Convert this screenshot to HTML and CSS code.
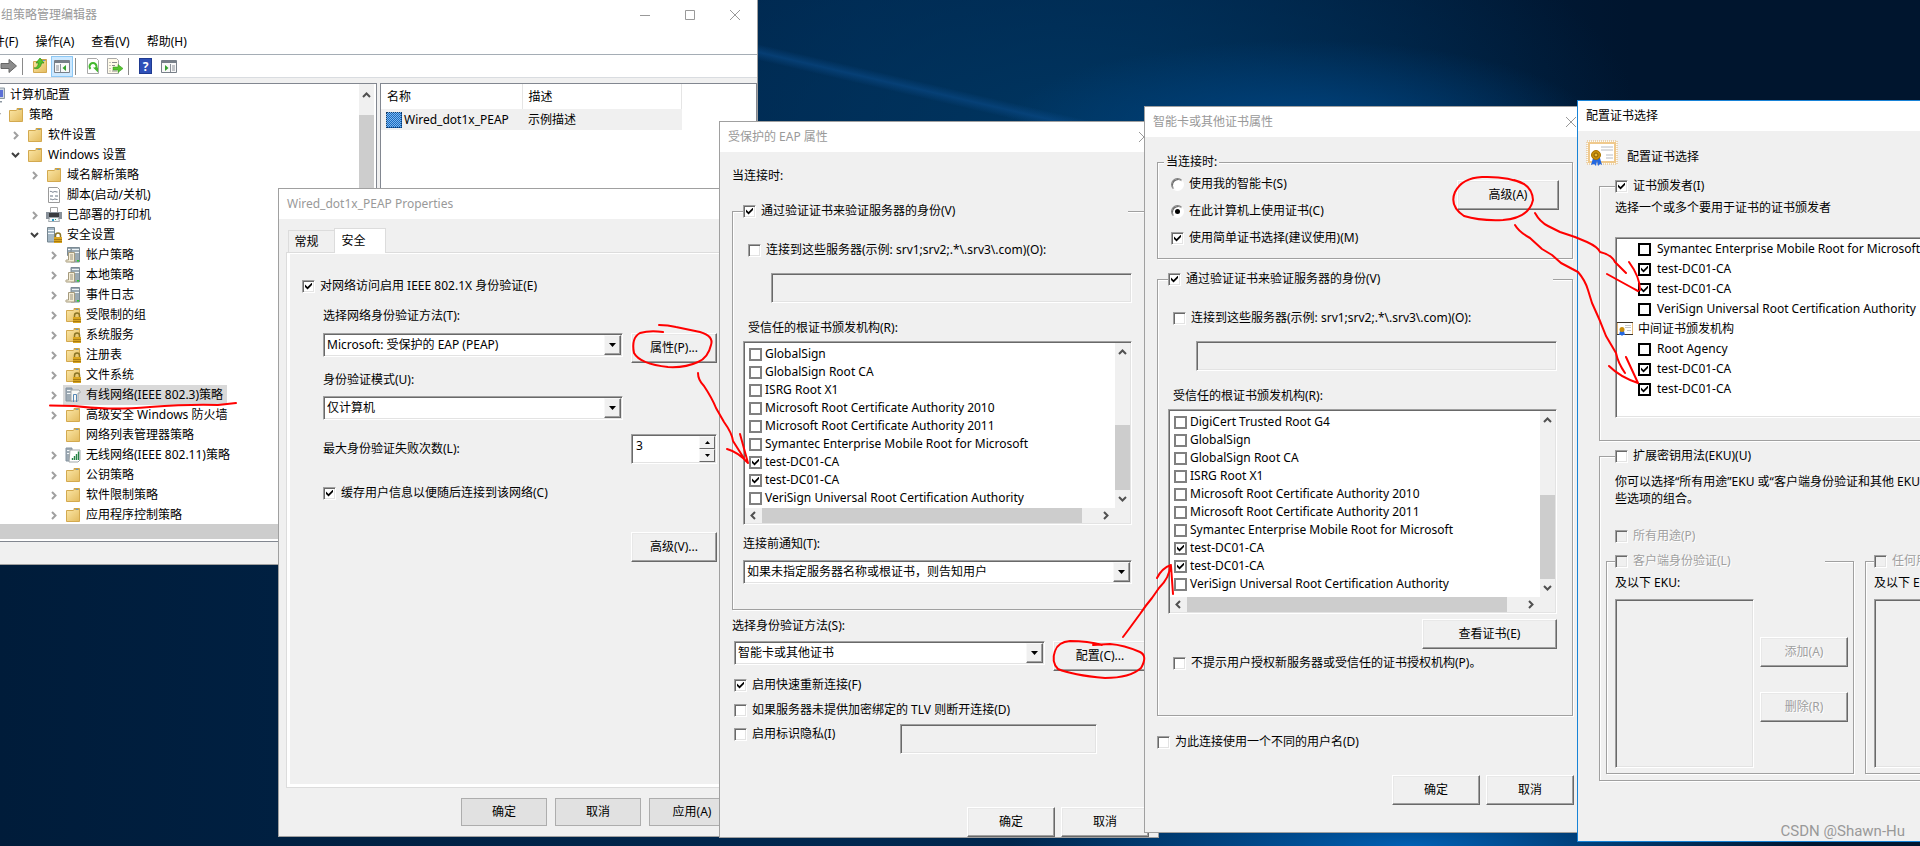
FILE: index.html
```html
<!DOCTYPE html>
<html lang="zh-CN">
<head>
<meta charset="utf-8">
<title>组策略管理编辑器</title>
<link rel="stylesheet" href="styles.css">
</head>
<body>
<svg class="sprite" aria-hidden="true">
  <defs>
    <linearGradient id="paper" x1="0" y1="0" x2="1" y2="1"><stop offset="0" stop-color="#fbe6a6"/><stop offset="1" stop-color="#e3bb5e"/></linearGradient>
  </defs>
  <symbol id="folder" viewBox="0 0 16 16">
    <path d="M9 2.500V1.500h5.500V14" fill="#f3d58a" stroke="#c9a14a"/>
    <path d="M1.500 3.500H8l1.500-1H14.500V14.500H1.500z" fill="url(#paper)" stroke="#d3a94f"/>
    <path d="M11 2.500h2" stroke="#5b9bd5"/>
  </symbol>
  <symbol id="lock" viewBox="0 0 16 16">
    <path d="M9.500 11V8.500a2.500 2.500 0 0 1 5 0V11" fill="none" stroke="#8a7425" stroke-width="1.500"/>
    <path d="M8 10h8v6H8z" fill="#d9a520"/><path d="M8 12.500h8M8 14.500h8" stroke="#a87a10"/>
  </symbol>
  <symbol id="folder-lock" viewBox="0 0 16 16"><use href="#folder"/><use href="#lock"/></symbol>
  <symbol id="tower" viewBox="0 0 16 16">
    <path d="M6 .5h8.500v14.500H6z" fill="#9aa9b3" stroke="#7b8a94"/>
    <path d="M7 2.500h7M7 5.500h7" stroke="#edf3f6"/><path d="M12 13h2v1.500h-2z" fill="#29d12c"/>
  </symbol>
  <symbol id="server-lock" viewBox="0 0 16 16">
    <path d="M1.500.5h7v14.500h-7z" fill="#a4b7c4" stroke="#75858f"/><path d="M2 3.500h6M2 6.500h6" stroke="#f2f7fa"/><use href="#lock"/>
  </symbol>
  <symbol id="policy" viewBox="0 0 16 16">
    <use href="#tower"/><path d="M3.500 5.500h6V15H1.500c-1 0-1-2 0-2h2z" fill="#f3ecd6" stroke="#a59a7d"/><path d="M5 8h3M5 10h3M5 12h3" stroke="#9b947e"/>
  </symbol>
  <symbol id="policies" viewBox="0 0 16 16">
    <path d="M2.500.5h5.500v8h-5.500z" fill="#9aa9b3" stroke="#7b8a94"/><path d="M3 2.500h5" stroke="#fff"/><use href="#policy"/>
  </symbol>
  <symbol id="wired" viewBox="0 0 16 16">
    <path d="M1 1h6v13H1z" fill="#9eabb5" stroke="#8593a0"/><path d="M2 3.500h4M2 6.500h4" stroke="#f4f8fa"/>
    <path d="M6 3h8l1 1v2h-2v8H6z" fill="#f8f8f4" stroke="#a1a7aa"/><path d="M8.500 15V7.500h3V15" fill="none" stroke="#5888b4"/>
  </symbol>
  <symbol id="wireless" viewBox="0 0 16 16">
    <path d="M1 1h6v13H1z" fill="#9eabb5" stroke="#8593a0"/><path d="M2 3.500h4M2 6.500h4" stroke="#f4f8fa"/>
    <path d="M5 3h10v10l-2 2H4z" fill="#fff" stroke="#a1a7aa"/><path d="M7.500 13v-2M9.500 13V9M11.500 13V7M13.500 13V4.500" stroke="#278447" stroke-width="1.400"/>
  </symbol>
  <symbol id="script" viewBox="0 0 16 16">
    <path d="M2.500.5h9l2 2v13h-11z" fill="#fff" stroke="#9a9a9a"/><path d="M4 5c1-2 2 1 3.500 0s2 0 4 0M4 9h3M9 9h3M4 12.500c1-1.500 2 1 3.500 0s2 0 4 0" fill="none" stroke="#657080"/>
  </symbol>
  <symbol id="printer" viewBox="0 0 16 16">
    <path d="M4.500.5h7v5h-7z" fill="#fff" stroke="#a5a5a5"/><path d="M0 5h16v7H0z" fill="#89919a"/><path d="M3 6h10v4H3z" fill="#393c40"/>
    <path d="M3.500 10.500h9l1 4h-11z" fill="#f4f9fb" stroke="#a3a9ad"/><path d="M6 12h2v2H6z" fill="#2b9ccc"/><path d="M9 12h1v1H9z" fill="#35a35b"/>
  </symbol>
  <symbol id="computer" viewBox="0 0 16 16">
    <path d="M1 1h14.500v10.500H1z" fill="#cfd8df" stroke="#8d98a2"/><path d="M3 3h11v7H3z" fill="#5b6fd6"/><path d="M6 12h5v2H6zM4 14h9v1.500H4z" fill="#8d98a2"/>
  </symbol>
  <symbol id="cert" viewBox="0 0 32 26">
    <path d="M1 1h30v23H1z" fill="#fffdf8" stroke="#e1b26b" stroke-dasharray="1 1"/><path d="M3 3h26v19H3z" fill="#fff" stroke="#efc98d" stroke-width="2"/>
    <path d="M15 7h12M15 10h12M20 15h7M20 18h7" stroke="#b8bcc2"/>
    <path d="M7 18 5 25l3-1 2 2 1-5 1 5 2-2 2 1-2-7z" fill="#2468e0"/>
    <circle cx="10" cy="15" r="4.500" fill="#c98f0c" stroke="#a87200"/><circle cx="10" cy="15" r="2" fill="#e8ba3c" stroke="#8c5f00"/>
  </symbol>
  <symbol id="cert-small" viewBox="0 0 16 14">
    <path d="M.5.5h15v12H.5z" fill="#fff" stroke="#e5b878"/><path d="M0 .5h16M0 12.500h16" stroke="#3c342a"/>
    <path d="M8 3.500h6M8 5.500h6M10 8.500h4" stroke="#c3c6ca"/><path d="M3 9l-1 4h2l1 1 1-1h2L7 9z" fill="#2468e0"/>
    <circle cx="5" cy="7.500" r="2.500" fill="#c98f0c"/>
  </symbol>
  <symbol id="close" viewBox="0 0 12 12"><path d="M1 1l10 10M11 1L1 11" fill="none" stroke="currentColor"/></symbol>
  <symbol id="up" viewBox="0 0 9 6"><path d="M1 5l3.500-3.500L8 5" fill="none" stroke="currentColor" stroke-width="2"/></symbol>
  <symbol id="down" viewBox="0 0 9 6"><path d="M1 1l3.500 3.500L8 1" fill="none" stroke="currentColor" stroke-width="2"/></symbol>
  <symbol id="left" viewBox="0 0 6 9"><path d="M5 1L1.500 4.500 5 8" fill="none" stroke="currentColor" stroke-width="2"/></symbol>
  <symbol id="right" viewBox="0 0 6 9"><path d="M1 1l3.500 3.500L1 8" fill="none" stroke="currentColor" stroke-width="2"/></symbol>
  <symbol id="tri-down" viewBox="0 0 7 4"><path d="M0 0h7L3.500 4z"/></symbol>
  <symbol id="tri-up" viewBox="0 0 7 4"><path d="M0 4h7L3.500 0z"/></symbol>
</svg>

<main class="desktop">

  <section class="window editor">
    <header class="editor-title">
      <span>组策略管理编辑器</span>
      <span class="caption">
        <button type="button" aria-label="最小化"><svg width="12" height="12"><path d="M1 6.500h10" stroke="currentColor"/></svg></button>
        <button type="button" aria-label="最大化"><svg width="12" height="12"><path d="M1.500 1.500h9v9h-9z" fill="none" stroke="currentColor"/></svg></button>
        <button type="button" aria-label="关闭"><svg width="12" height="12"><use href="#close"/></svg></button>
      </span>
    </header>
    <nav class="menu">
      <button type="button">文件(F)</button><button type="button">操作(A)</button><button type="button">查看(V)</button><button type="button">帮助(H)</button>
    </nav>
    <div class="toolbar">
      <button type="button" aria-label="前进"><svg width="18" height="16"><path d="M1 5.500h8V1.500L16.500 8 9 14.500V10.500H1z" fill="#8c8c8c" stroke="#666"/></svg></button>
      <i class="sep"></i>
      <button type="button" aria-label="上一级"><svg width="16" height="16"><use href="#folder"/><path d="M2 10c3 0 4-2 4.500-5H4l4-5 4 5H9.500C9 9 6 12 2 10z" fill="#55c52d" stroke="#2d8c18" stroke-width=".7"/></svg></button>
      <button type="button" class="pressed" aria-label="显示树"><svg width="16" height="16"><path d="M.5 2.500h15v12H.5z" fill="#f8f8f8" stroke="#777f88"/><path d="M1 4h14" stroke="#777f88" stroke-width="2"/><path d="M6.500 6v8M2 8h3M2 10h3M2 12h3" stroke="#8a9098"/><path d="M12 7v6L8.500 10z" fill="#33a02c"/></svg></button>
      <i class="sep"></i>
      <button type="button" aria-label="刷新"><svg width="16" height="16"><path d="M2.500.5h9l2 2v13h-11z" fill="#fff" stroke="#a9a9a9"/><path d="M5.500 11A3.500 3.500 0 1 1 10.500 11" fill="none" stroke="#43b82f" stroke-width="2"/><path d="M8 9.500h5v5z" fill="#43b82f"/></svg></button>
      <button type="button" aria-label="导出列表"><svg width="18" height="16"><path d="M1.500.5h9l2 2v13h-11z" fill="#fffbe9" stroke="#a9a9a9"/><path d="M3.500 4.500h1M6 4.500h5M3.500 7.500h1M6 7.500h3M3.500 10.500h1M3.500 13h1M6 13h5" stroke="#8b8b8b"/><path d="M7 9h5V6.500l5 4-5 4V12H7z" fill="#55c52d" stroke="#2d8c18" stroke-width=".5"/></svg></button>
      <i class="sep"></i>
      <button type="button" class="help" aria-label="帮助">?</button>
      <button type="button" aria-label="操作窗格"><svg width="16" height="16"><path d="M.5 2.500h15v12H.5z" fill="#f8f8f8" stroke="#777f88"/><path d="M1 4h14" stroke="#777f88" stroke-width="2"/><path d="M9.500 6v8M11 8h3M11 10h3M11 12h3" stroke="#8a9098"/><path d="M4 7v6l3.500-3z" fill="#33a02c"/></svg></button>
    </div>
    <div class="panes">
      <div class="pane tree-pane">
        <ul class="tree">
          <li><div class="node"><i class="chev"></i><span><svg><use href="#computer"/></svg>计算机配置</span></div>
          <ul>
            <li><div class="node"><i class="chev open"><svg><use href="#down"/></svg></i><span><svg><use href="#folder"/></svg>策略</span></div>
            <ul>
              <li><div class="node"><i class="chev"><svg><use href="#right"/></svg></i><span><svg><use href="#folder"/></svg>软件设置</span></div></li>
              <li><div class="node"><i class="chev open"><svg><use href="#down"/></svg></i><span><svg><use href="#folder"/></svg>Windows 设置</span></div>
              <ul>
                <li><div class="node"><i class="chev"><svg><use href="#right"/></svg></i><span><svg><use href="#folder"/></svg>域名解析策略</span></div></li>
                <li><div class="node"><i class="chev"></i><span><svg><use href="#script"/></svg>脚本(启动/关机)</span></div></li>
                <li><div class="node"><i class="chev"><svg><use href="#right"/></svg></i><span><svg><use href="#printer"/></svg>已部署的打印机</span></div></li>
                <li><div class="node"><i class="chev open"><svg><use href="#down"/></svg></i><span><svg><use href="#server-lock"/></svg>安全设置</span></div>
                <ul>
                  <li><div class="node"><i class="chev"><svg><use href="#right"/></svg></i><span><svg><use href="#policies"/></svg>帐户策略</span></div></li>
                  <li><div class="node"><i class="chev"><svg><use href="#right"/></svg></i><span><svg><use href="#policy"/></svg>本地策略</span></div></li>
                  <li><div class="node"><i class="chev"><svg><use href="#right"/></svg></i><span><svg><use href="#policy"/></svg>事件日志</span></div></li>
                  <li><div class="node"><i class="chev"><svg><use href="#right"/></svg></i><span><svg><use href="#folder-lock"/></svg>受限制的组</span></div></li>
                  <li><div class="node"><i class="chev"><svg><use href="#right"/></svg></i><span><svg><use href="#folder-lock"/></svg>系统服务</span></div></li>
                  <li><div class="node"><i class="chev"><svg><use href="#right"/></svg></i><span><svg><use href="#folder-lock"/></svg>注册表</span></div></li>
                  <li><div class="node"><i class="chev"><svg><use href="#right"/></svg></i><span><svg><use href="#folder-lock"/></svg>文件系统</span></div></li>
                  <li><div class="node selected"><i class="chev"><svg><use href="#right"/></svg></i><span><svg><use href="#wired"/></svg>有线网络(IEEE 802.3)策略</span></div></li>
                  <li><div class="node"><i class="chev"><svg><use href="#right"/></svg></i><span><svg><use href="#folder"/></svg>高级安全 Windows 防火墙</span></div></li>
                  <li><div class="node"><i class="chev"></i><span><svg><use href="#folder"/></svg>网络列表管理器策略</span></div></li>
                  <li><div class="node"><i class="chev"><svg><use href="#right"/></svg></i><span><svg><use href="#wireless"/></svg>无线网络(IEEE 802.11)策略</span></div></li>
                  <li><div class="node"><i class="chev"><svg><use href="#right"/></svg></i><span><svg><use href="#folder"/></svg>公钥策略</span></div></li>
                  <li><div class="node"><i class="chev"><svg><use href="#right"/></svg></i><span><svg><use href="#folder"/></svg>软件限制策略</span></div></li>
                  <li><div class="node"><i class="chev"><svg><use href="#right"/></svg></i><span><svg><use href="#folder"/></svg>应用程序控制策略</span></div></li>
                </ul></li>
              </ul></li>
            </ul></li>
          </ul></li>
        </ul>
        <div class="tree-scroll"><svg width="9" height="6"><use href="#up"/></svg><i class="thumb"></i></div>
        <div class="tree-hscroll"></div>
      </div>
      <div class="pane list-pane">
        <table class="details">
          <thead><tr><th>名称</th><th>描述</th></tr></thead>
          <tbody><tr><td><span class="file"><i class="file-icon"></i>Wired_dot1x_PEAP</span></td><td>示例描述</td></tr></tbody>
        </table>
      </div>
    </div>
  </section>

  <section class="window props">
    <header class="title"><span>Wired_dot1x_PEAP Properties</span></header>
    <div class="props-body">
      <div class="tabs"><button type="button" class="tab">常规</button><button type="button" class="tab current">安全</button></div>
      <div class="tab-panel">
        <label class="check"><input type="checkbox" checked>对网络访问启用 IEEE 802.1X 身份验证(E)</label>
        <div class="fields">
          <label class="line method-label" for="method">选择网络身份验证方法(T):</label>
          <div class="pair">
            <div class="combo"><select id="method"><option>Microsoft: 受保护的 EAP (PEAP)</option></select><span class="drop"><svg width="7" height="4"><use href="#tri-down"/></svg></span></div>
            <button type="button" class="btn">属性(P)...</button>
          </div>
          <label class="line mode-label" for="mode">身份验证模式(U):</label>
          <div class="combo"><select id="mode"><option>仅计算机</option></select><span class="drop"><svg width="7" height="4"><use href="#tri-down"/></svg></span></div>
          <div class="pair failures">
            <label for="fails">最大身份验证失败次数(L):</label>
            <div class="spin"><input id="fails" type="text" value="3"><span class="steps"><button type="button" aria-label="增加"><svg width="5" height="3"><use href="#tri-up"/></svg></button><button type="button" aria-label="减少"><svg width="5" height="3"><use href="#tri-down"/></svg></button></span></div>
          </div>
          <label class="check cache"><input type="checkbox" checked>缓存用户信息以便随后连接到该网络(C)</label>
          <button type="button" class="btn more">高级(V)...</button>
        </div>
      </div>
      <footer class="flat-actions"><button type="button">确定</button><button type="button">取消</button><button type="button">应用(A)</button></footer>
    </div>
  </section>

  <section class="window eap">
    <header class="title"><span>受保护的 EAP 属性</span><button type="button" aria-label="关闭"><svg width="12" height="12"><use href="#close"/></svg></button></header>
    <div class="dialog-body">
      <p class="line">当连接时:</p>
      <fieldset class="group verify">
        <legend><label class="check"><input type="checkbox" checked>通过验证证书来验证服务器的身份(V)</label></legend>
        <label class="check servers"><input type="checkbox">连接到这些服务器(示例: srv1;srv2;.*\.srv3\.com)(O):</label>
        <input class="sunken server-names" type="text" aria-label="服务器" disabled>
        <p class="line roots-label">受信任的根证书颁发机构(R):</p>
        <div class="sunken listbox">
          <ul>
            <li><label><input type="checkbox">GlobalSign</label></li>
            <li><label><input type="checkbox">GlobalSign Root CA</label></li>
            <li><label><input type="checkbox">ISRG Root X1</label></li>
            <li><label><input type="checkbox">Microsoft Root Certificate Authority 2010</label></li>
            <li><label><input type="checkbox">Microsoft Root Certificate Authority 2011</label></li>
            <li><label><input type="checkbox">Symantec Enterprise Mobile Root for Microsoft</label></li>
            <li><label><input type="checkbox" checked>test-DC01-CA</label></li>
            <li><label><input type="checkbox" checked>test-DC01-CA</label></li>
            <li><label><input type="checkbox">VeriSign Universal Root Certification Authority</label></li>
          </ul>
          <div class="vbar"><svg width="9" height="6"><use href="#up"/></svg><i class="thumb"></i><svg width="9" height="6"><use href="#down"/></svg></div>
          <div class="hbar"><svg width="6" height="9"><use href="#left"/></svg><i class="thumb"></i><svg width="6" height="9"><use href="#right"/></svg></div>
        </div>
        <label class="line notify-label" for="notify">连接前通知(T):</label>
        <div class="combo notify"><select id="notify"><option>如果未指定服务器名称或根证书，则告知用户</option></select><span class="drop"><svg width="7" height="4"><use href="#tri-down"/></svg></span></div>
      </fieldset>
      <label class="line auth-label" for="auth">选择身份验证方法(S):</label>
      <div class="auth-options">
        <div class="pair">
          <div class="combo"><select id="auth"><option>智能卡或其他证书</option></select><span class="drop"><svg width="7" height="4"><use href="#tri-down"/></svg></span></div>
          <button type="button" class="btn">配置(C)...</button>
        </div>
        <label class="check reconnect"><input type="checkbox" checked>启用快速重新连接(F)</label>
        <label class="check tlv"><input type="checkbox">如果服务器未提供加密绑定的 TLV 则断开连接(D)</label>
        <div class="privacy"><label class="check"><input type="checkbox">启用标识隐私(I)</label><input class="sunken" type="text" aria-label="标识" disabled></div>
      </div>
      <footer class="actions"><button type="button" class="btn">确定</button><button type="button" class="btn">取消</button></footer>
    </div>
  </section>

  <section class="window card">
    <header class="title"><span>智能卡或其他证书属性</span><button type="button" aria-label="关闭"><svg width="12" height="12"><use href="#close"/></svg></button></header>
    <div class="dialog-body">
      <fieldset class="group connecting">
        <legend>当连接时:</legend>
        <div class="connect-row">
          <div class="choices">
            <label class="check"><input type="radio" name="source">使用我的智能卡(S)</label>
            <label class="check"><input type="radio" name="source" checked>在此计算机上使用证书(C)</label>
            <label class="check"><input type="checkbox" checked>使用简单证书选择(建议使用)(M)</label>
          </div>
          <button type="button" class="btn">高级(A)</button>
        </div>
      </fieldset>
      <fieldset class="group verify">
        <legend><label class="check"><input type="checkbox" checked>通过验证证书来验证服务器的身份(V)</label></legend>
        <label class="check servers"><input type="checkbox">连接到这些服务器(示例: srv1;srv2;.*\.srv3\.com)(O):</label>
        <input class="sunken server-names" type="text" aria-label="服务器" disabled>
        <p class="line roots-label">受信任的根证书颁发机构(R):</p>
        <div class="sunken listbox">
          <ul>
            <li><label><input type="checkbox">DigiCert Trusted Root G4</label></li>
            <li><label><input type="checkbox">GlobalSign</label></li>
            <li><label><input type="checkbox">GlobalSign Root CA</label></li>
            <li><label><input type="checkbox">ISRG Root X1</label></li>
            <li><label><input type="checkbox">Microsoft Root Certificate Authority 2010</label></li>
            <li><label><input type="checkbox">Microsoft Root Certificate Authority 2011</label></li>
            <li><label><input type="checkbox">Symantec Enterprise Mobile Root for Microsoft</label></li>
            <li><label><input type="checkbox" checked>test-DC01-CA</label></li>
            <li><label><input type="checkbox" checked>test-DC01-CA</label></li>
            <li><label><input type="checkbox">VeriSign Universal Root Certification Authority</label></li>
          </ul>
          <div class="vbar"><svg width="9" height="6"><use href="#up"/></svg><i class="thumb"></i><svg width="9" height="6"><use href="#down"/></svg></div>
          <div class="hbar"><svg width="6" height="9"><use href="#left"/></svg><i class="thumb"></i><svg width="6" height="9"><use href="#right"/></svg></div>
        </div>
        <div class="view-row"><button type="button" class="btn">查看证书(E)</button></div>
        <label class="check no-prompt"><input type="checkbox">不提示用户授权新服务器或受信任的证书授权机构(P)。</label>
      </fieldset>
      <label class="check other-user"><input type="checkbox">为此连接使用一个不同的用户名(D)</label>
      <footer class="actions"><button type="button" class="btn">确定</button><button type="button" class="btn">取消</button></footer>
    </div>
  </section>

  <section class="window chooser">
    <header class="title"><span>配置证书选择</span></header>
    <div class="chooser-body">
      <div class="chooser-head"><svg width="32" height="26"><use href="#cert"/></svg><span>配置证书选择</span></div>
      <fieldset class="group issuers">
        <legend><label class="check"><input type="checkbox" checked>证书颁发者(I)</label></legend>
        <p class="line">选择一个或多个要用于证书的证书颁发者</p>
        <ul class="sunken issuer-list">
          <li><label><input type="checkbox">Symantec Enterprise Mobile Root for Microsoft</label></li>
          <li><label><input type="checkbox" checked>test-DC01-CA</label></li>
          <li><label><input type="checkbox" checked>test-DC01-CA</label></li>
          <li><label><input type="checkbox">VeriSign Universal Root Certification Authority</label></li>
          <li class="category"><svg width="16" height="14"><use href="#cert-small"/></svg>中间证书颁发机构</li>
          <li><label><input type="checkbox">Root Agency</label></li>
          <li><label><input type="checkbox" checked>test-DC01-CA</label></li>
          <li><label><input type="checkbox" checked>test-DC01-CA</label></li>
        </ul>
      </fieldset>
      <fieldset class="group eku">
        <legend><label class="check"><input type="checkbox">扩展密钥用法(EKU)(U)</label></legend>
        <p class="hint">你可以选择“所有用途”EKU 或“客户端身份验证和其他 EKU”的<br>些选项的组合。</p>
        <label class="check all-uses"><input type="checkbox" disabled>所有用途(P)</label>
        <div class="subgroups">
          <fieldset class="group sub">
            <legend><label class="check"><input type="checkbox" disabled>客户端身份验证(L)</label></legend>
            <p class="line">及以下 EKU:</p>
            <div class="sub-row"><div class="sunken empty"></div><div class="sub-buttons"><button type="button" class="btn" disabled>添加(A)</button><button type="button" class="btn" disabled>删除(R)</button></div></div>
          </fieldset>
          <fieldset class="group sub">
            <legend><label class="check"><input type="checkbox" disabled>任何用途(Y)</label></legend>
            <p class="line">及以下 EKU:</p>
            <div class="sub-row"><div class="sunken empty"></div><div class="sub-buttons"><button type="button" class="btn" disabled>添加(D)</button><button type="button" class="btn" disabled>删除(E)</button></div></div>
          </fieldset>
        </div>
      </fieldset>
    </div>
  </section>

  <svg class="ink" width="1920" height="846" aria-hidden="true">
    <path d="M50 405.500L74 406Q90 408 108 408.500T150 407Q190 404 218 405L236 403"/>
    <path d="M659 325Q668 325 676 327L700 332Q714 336 711 345Q708 358 698 362Q685 368 668 367Q640 364 634 353Q631 338 640 333Q650 330 663 332"/>
    <path d="M698 373Q698 380 704 386Q712 398 716 408L724 422Q732 433 733 441L745 460M727 449Q738 452 748 463M740 434L748 463"/>
    <path d="M1102 645Q1088 641 1070 641Q1058 642 1055 651Q1051 662 1058 669Q1072 675 1105 678Q1130 678 1141 668Q1148 656 1140 652Q1124 645 1110 644L1093 645"/>
    <path d="M1123 637L1129 629L1140 614Q1146 605 1152 598L1159 588Q1170 577 1170 566M1157 578Q1162 568 1171 565M1173 594L1171 566"/>
    <path d="M1524 184Q1508 176 1482 177Q1462 178 1455 192Q1449 206 1464 216Q1480 221 1503 220Q1529 218 1533 200Q1532 184 1514 180"/>
    <path d="M1535 213Q1540 222 1548 226L1560 232L1575 237L1587 242Q1598 247 1600 252Q1612 255 1615 262L1626 273M1629 262Q1640 277 1640 290M1607 274Q1625 284 1638 291"/>
    <path d="M1515 225Q1519 232 1530 238L1542 249L1552 255L1561 263L1578 272Q1585 280 1588 290L1592 303Q1600 320 1606 336L1616 353Q1618 363 1625 373M1626 357L1638 383M1609 366Q1620 377 1638 383"/>
  </svg>
  <span class="watermark">CSDN @Shawn-Hu</span>
</main>
</body>
</html>
```
FILE: styles.css
```css
* { box-sizing: border-box; }
body {
  margin: 0;
  font: 12px/16px "Noto Sans", "Noto Sans CJK SC", sans-serif;
  color: #000;
}
p, ul { margin: 0; padding: 0; }
ul { list-style: none; }
button, input, select { font: inherit; color: inherit; margin: 0; padding: 0; border: 0; background: none; border-radius: 0; }
svg { display: block; flex: none; }
.sprite { position: absolute; width: 0; height: 0; }

.desktop {
  position: relative;
  min-height: 100vh;
  overflow: hidden;
  white-space: nowrap;
  background:
    radial-gradient(ellipse 400px 60px at 1410px 846px, #0060b4, transparent),
    radial-gradient(ellipse 300px 90px at 1300px 130px, #004480, transparent),
    radial-gradient(ellipse 560px 260px at 1080px 130px, #003560, transparent),
    linear-gradient(12deg, transparent 0 100%),
    linear-gradient(90deg, #001c3a, #002850 45%, #00254a 60%, #00152e 85%);
}
.desktop::before {
  content: "";
  position: absolute;
  left: 740px;
  top: 40px;
  width: 480px;
  height: 16px;
  background: linear-gradient(#0a4a8800, #0a4a8899, #0a4a8800);
  transform: rotate(13deg);
  transform-origin: left;
}

.window { position: absolute; background: #f0f0f0; border: 1px solid #a0a0a0; }

/* Shared dialog parts */
.title { display: flex; justify-content: space-between; align-items: center; height: 30px; padding: 0 7px 0 8px; background: #fff; color: #999; }
.line { display: block; }
.check { display: flex; align-items: center; gap: 5px; }
input[type="checkbox"], input[type="radio"] {
  appearance: none;
  flex: none;
  width: 13px;
  height: 13px;
  background: #fff;
  border: 1px solid;
  border-color: #a0a0a0 #fff #fff #a0a0a0;
  box-shadow: inset 1px 1px #696969, inset -1px -1px #e3e3e3;
}
input[type="checkbox"]:checked::after {
  content: "";
  display: block;
  width: 7px;
  height: 7px;
  margin: 2px;
  background: #000;
  clip-path: polygon(0 28%, 36% 64%, 100% 0, 100% 36%, 36% 100%, 0 64%);
}
input[type="radio"] { border-radius: 50%; border-color: #808080 #fff #fff #808080; box-shadow: inset 1px 1px #696969; }
input[type="radio"]:checked::after {
  content: "";
  display: block;
  width: 5px;
  height: 5px;
  margin: 3px;
  border-radius: 50%;
  background: #000;
}
input[type="checkbox"]:disabled { background: #f0f0f0; }
.check:has(:disabled), .btn:disabled { color: #a0a0a0; text-shadow: 1px 1px #fff; }

.btn {
  flex: none;
  width: 88px;
  height: 30px;
  background: #f0f0f0;
  border: 1px solid;
  border-color: #fff #696969 #696969 #fff;
  box-shadow: inset -1px -1px #a0a0a0, inset 1px 1px #e8e8e8;
}
.sunken {
  border: 1px solid;
  border-color: #a0a0a0 #fff #fff #a0a0a0;
  box-shadow: inset 1px 1px #696969, inset -1px -1px #e3e3e3;
}
.combo, .spin {
  display: flex;
  height: 24px;
  padding: 1px;
  background: #fff;
  border: 1px solid;
  border-color: #a0a0a0 #fff #fff #a0a0a0;
  box-shadow: inset 1px 1px #696969, inset -1px -1px #e3e3e3;
}
.combo select { appearance: none; flex: 1; min-width: 0; padding-left: 2px; }
.drop {
  display: grid;
  place-items: center;
  width: 17px;
  background: #f0f0f0;
  border: 1px solid;
  border-color: #f8f8f8 #696969 #696969 #f8f8f8;
  box-shadow: inset -1px -1px #a0a0a0;
}
.pair { display: flex; gap: 8px; }
.group {
  min-width: 0;
  margin: 0;
  padding: 0 0 0 10px;
  border: 1px solid #a0a0a0;
  box-shadow: 1px 1px #fff, inset 1px 1px #fff;
}
.group > legend { padding: 0; height: 16px; background: #f0f0f0; }
.actions { display: flex; justify-content: flex-end; gap: 6px; }

/* Policy editor */
.editor { left: -40px; top: -1px; width: 798px; height: 566px; display: flex; flex-direction: column; }
.editor-title { display: flex; justify-content: space-between; align-items: center; height: 30px; padding-left: 40px; background: #fff; color: #999; }
.caption { display: flex; }
.caption button { display: grid; place-items: center; width: 45px; height: 30px; }
.menu { display: flex; gap: 17px; height: 24px; padding: 0 0 0 20px; background: #fff; }
.toolbar { display: flex; align-items: center; height: 24px; padding-left: 37px; background: #fff; border-top: 1px solid #a5adb5; border-bottom: 1px solid #d9dce0; }
.toolbar button { display: grid; place-items: center; width: 22px; height: 20px; }
.toolbar button.pressed { height: 21px; background: #cce8ff; border: 1px solid #8cc8f5; }
.toolbar button.help { width: 13px; height: 16px; margin: 0 6px 0 4px; background: #2e50b8; color: #fff; font-weight: bold; border: 1px solid #1f3a90; }
.sep { width: 1px; height: 17px; margin: 0 6px 0 2px; background: #8a8a8a; }
.panes { display: flex; flex: 1; gap: 3px; padding: 5px 0 22px; min-height: 0; }
.pane { background: #fff; border: 1px solid #828790; }
.tree-pane { flex: none; width: 416px; display: grid; grid-template-columns: 1fr 17px; grid-template-rows: 440px 15px 1fr; }
.tree { padding: 1px 0 0 13px; }
.tree ul { padding-left: 19px; }
.node { display: flex; align-items: center; height: 20px; }
.node > span { display: flex; align-items: center; gap: 5px; height: 20px; padding: 0 4px 0 2px; }
.node > span svg { width: 16px; height: 16px; }
.node.selected > span { background: #d9d9d9; }
.chev { display: flex; align-items: center; width: 12px; color: #a0a0a0; }
.chev svg { width: 6px; height: 9px; }
.chev.open { margin-left: -2px; padding-right: 2px; width: 14px; color: #404040; }
.chev.open svg { width: 9px; height: 6px; }
.tree-scroll { display: flex; flex-direction: column; align-items: center; width: 15px; padding-top: 8px; gap: 17px; background: #f0f0f0; color: #505050; }
.tree-scroll .thumb { width: 15px; height: 300px; }
.tree-hscroll { grid-column: 1 / -1; background: #cdcdcd; }
.thumb { background: #cdcdcd; }
.list-pane { flex: 1; }
.details { border-collapse: collapse; table-layout: fixed; width: 301px; text-align: left; }
.details th { height: 25px; padding: 0 0 0 6px; font-weight: normal; border-right: 1px solid #e5e5e5; }
.details th:first-child { width: 141px; }
.details td { height: 21px; padding: 0 0 0 6px; background: #f0f0f0; }
.details td:first-child { padding-left: 5px; }
.file { display: flex; align-items: center; gap: 2px; }
.file-icon { width: 16px; height: 16px; background: repeating-conic-gradient(#1b6bc0 0 25%, #7db7ee 0 50%) 0 0 / 2px 2px; border: 1px dotted #103a68; }

/* Wired_dot1x_PEAP properties */
.props { left: 278px; top: 188px; width: 465px; }
.props-body { padding: 9px 7px 10px; }
.tabs { position: relative; z-index: 1; display: flex; align-items: flex-end; height: 25px; padding-left: 2px; }
.tab { width: 46px; height: 23px; padding-right: 10px; border: 1px solid #dcdcdc; border-right: 0; }
.tab.current { width: 52px; height: 25px; padding-right: 13px; background: #fff; border-right: 1px solid #dcdcdc; border-bottom: 0; }
.tab-panel { height: 536px; margin-top: -1px; padding: 25px 0 0 15px; border: 1px solid #dcdcdc; box-shadow: inset 3px 1px #fff, inset 0 -3px #fff; }
.fields { display: flex; flex-direction: column; width: 394px; margin-left: 21px; }
.fields .combo { width: 300px; }
.fields .btn { width: 86px; }
.method-label { margin: 14px 0 9px; }
.mode-label { margin: 9px 0 8px; }
.failures { align-items: center; justify-content: space-between; margin-top: 14px; }
.spin { width: 86px; height: 30px; }
.spin input { flex: 1; min-width: 0; padding: 0 0 6px 3px; }
.steps { display: flex; flex-direction: column; width: 16px; }
.steps button { flex: 1; display: grid; place-items: center; background: #f0f0f0; border: 1px solid; border-color: #f8f8f8 #696969 #696969 #f8f8f8; }
.cache { margin-top: 21px; }
.fields .more { margin: 31px 0 0 auto; }
.flat-actions { display: flex; justify-content: flex-end; gap: 8px; margin-top: 10px; }
.flat-actions button { width: 86px; height: 28px; background: #e1e1e1; border: 1px solid #adadad; }

/* Protected EAP and smart card dialogs */
.eap { left: 719px; top: 121px; width: 440px; }
.card { left: 1144px; top: 106px; width: 440px; }
.title button { display: grid; place-items: center; width: 12px; height: 12px; }
.eap .title { padding-right: 8px; }
.card .title { padding-right: 6px; }
.dialog-body { padding: 16px 9px 0 12px; }
.verify > legend { width: 385px; }
.verify .servers { margin: 23px 0 15px 5px; }
.server-names { display: block; width: 361px; height: 30px; margin-left: 28px; }
.roots-label { margin: 17px 0 5px 5px; }
.listbox { display: grid; grid-template-columns: 1fr 15px; grid-template-rows: auto 15px; width: 389px; padding: 1px; background: #fff; }
.listbox ul { padding: 2px 0 1px; }
.listbox label { display: flex; align-items: center; gap: 3px; height: 18px; padding-left: 4px; }
.listbox input[type="checkbox"] { border: 2px solid #808080; box-shadow: none; }
.listbox input:checked::after { margin: 1px; }
.vbar, .hbar { display: flex; align-items: center; background: #f0f0f0; color: #505050; }
.vbar { flex-direction: column; padding: 6px 0 6px; }
.vbar .thumb { width: 15px; height: 65px; margin: auto 0 6px; }
.hbar { grid-column: 1 / -1; padding: 0 21px 0 5px; }
.hbar .thumb { width: 320px; height: 15px; margin: 0 auto 0 6px; }
.eap .verify { margin-top: 19px; padding-bottom: 25px; }
.notify-label { margin: 11px 0 8px; }
.notify { width: 389px; }
.auth-label { margin: 8px 0 7px; }
.auth-options { padding-left: 2px; }
.auth-options .combo { width: 311px; }
.auth-options .btn { width: 94px; }
.reconnect { margin: 6px 0 9px; }
.privacy { display: flex; align-items: flex-start; margin-top: 6px; }
.privacy .check { width: 166px; padding-top: 2px; }
.privacy .sunken { width: 197px; height: 30px; }
.eap .actions { margin-top: 53px; }

.card .dialog-body { padding: 17px 9px 27px 12px; }
.card .group { margin-right: 1px; }
.connecting { padding: 0 13px 12px 8px; }
.connecting > legend { margin-left: -2px; padding: 0 2px; }
.connect-row { display: flex; justify-content: space-between; }
.connect-row .btn { width: 102px; margin-top: 10px; }
.choices { display: grid; gap: 11px; padding: 6px 0 0 5px; }
.card .verify { margin-top: 12px; padding-bottom: 44px; }
.card .listbox ul { padding-bottom: 4px; }
.card .vbar .thumb { height: 84px; }
.view-row { display: flex; justify-content: flex-end; width: 389px; margin-top: 5px; }
.view-row .btn { width: 135px; }
.no-prompt { margin: 6px 0 0 5px; }
.other-user { margin: 18px 0 25px; }

/* Certificate selection */
.chooser { left: 1577px; top: 100px; width: 560px; border-color: #1883d7; }
.chooser .title { color: #000; }
.chooser-body { padding: 9px 16px 60px 21px; }
.chooser-head { display: flex; align-items: center; gap: 9px; margin: 0 0 12px -13px; }
.chooser-head span { padding-top: 8px; }
.issuers { padding: 0 15px 22px; }
.issuers > legend, .eku > legend { width: 400px; }
.issuers .line { margin: 6px 0 21px; }
.issuer-list { height: 181px; padding: 1px; background: #fff; }
.issuer-list li { height: 20px; display: flex; align-items: center; gap: 5px; }
.issuer-list label { display: flex; align-items: center; gap: 6px; padding-left: 21px; }
.issuer-list input[type="checkbox"] { border: 2px solid #000; box-shadow: none; }
.issuer-list input:checked::after { margin: 1px; }
.eku { margin-top: 7px; padding: 0 6px 6px; }
.eku > legend { margin-left: 9px; }
.hint { margin: 9px 0 0 9px; line-height: 17px; }
.all-uses { margin: 21px 0 9px 9px; }
.subgroups { display: flex; gap: 11px; }
.sub { flex: none; width: 248px; padding: 0 5px 5px 8px; }
.sub > legend { width: 210px; }
.sub .line { margin: 6px 0 8px; }
.sub-row { display: flex; gap: 6px; }
.empty { width: 139px; height: 169px; }
.sub-buttons { display: grid; align-content: start; gap: 25px; padding-top: 38px; }

/* Hand-drawn marks above the windows */
.ink { position: absolute; left: 0; top: 0; fill: none; stroke: #f00; stroke-width: 2; stroke-linecap: round; stroke-linejoin: round; pointer-events: none; }
.watermark { position: absolute; right: 15px; bottom: 7px; font: 15px/16px Roboto, "Liberation Sans", sans-serif; color: #999; }
```
